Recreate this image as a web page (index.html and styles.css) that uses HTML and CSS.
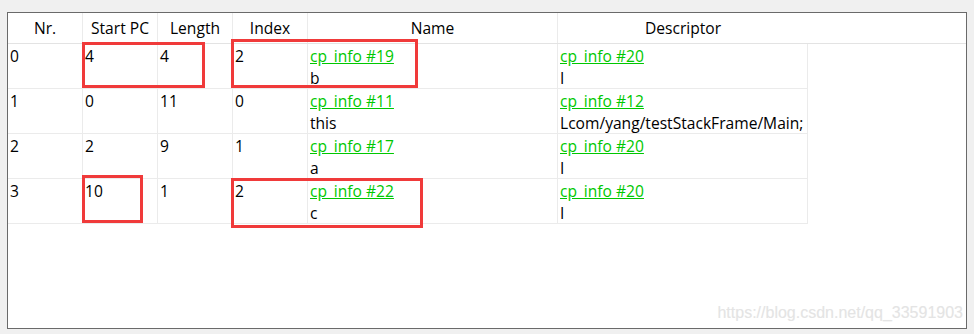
FILE: index.html
```
<!DOCTYPE html>
<html lang="en">
<head>
    <meta charset="UTF-8">
    <title>Local Variable Table</title>
    <link rel="stylesheet" href="styles.css">
</head>
<body>

    <div class="frame">
        <div class="row head">
            <div class="cell">Nr.</div>
            <div class="cell">Start PC</div>
            <div class="cell">Length</div>
            <div class="cell">Index</div>
            <div class="cell wide">Name</div>
            <div class="cell wide last">Descriptor</div>
        </div>

        <div class="row">
            <div class="cell">0</div>
            <div class="cell">4</div>
            <div class="cell">4</div>
            <div class="cell">2</div>
            <div class="cell wide"><a href="#">cp_info #19</a><span>b</span></div>
            <div class="cell wide"><a href="#">cp_info #20</a><span>I</span></div>
        </div>
        <div class="row">
            <div class="cell">1</div>
            <div class="cell">0</div>
            <div class="cell">11</div>
            <div class="cell">0</div>
            <div class="cell wide"><a href="#">cp_info #11</a><span>this</span></div>
            <div class="cell wide"><a href="#">cp_info #12</a><span>Lcom/yang/testStackFrame/Main;</span></div>
        </div>
        <div class="row">
            <div class="cell">2</div>
            <div class="cell">2</div>
            <div class="cell">9</div>
            <div class="cell">1</div>
            <div class="cell wide"><a href="#">cp_info #17</a><span>a</span></div>
            <div class="cell wide"><a href="#">cp_info #20</a><span>I</span></div>
        </div>
        <div class="row">
            <div class="cell">3</div>
            <div class="cell">10</div>
            <div class="cell">1</div>
            <div class="cell">2</div>
            <div class="cell wide"><a href="#">cp_info #22</a><span>c</span></div>
            <div class="cell wide"><a href="#">cp_info #20</a><span>I</span></div>
        </div>

        <!-- highlight boxes drawn on top of the table -->
        <div class="mark m1"></div>
        <div class="mark m2"></div>
        <div class="mark m3"></div>
        <div class="mark m4"></div>

        <div class="watermark">https://blog.csdn.net/qq_33591903</div>
    </div>

</body>
</html>
```

FILE: styles.css
```
body {
    margin: 0;
    background-color: #f0f0f0;
    font-family: "Open Sans", "Noto Sans CJK SC", sans-serif;
    font-size: 15.6px;
    color: #000;
}
.frame {
    position: relative;
    margin: 12px 0 0 7px;
    width: 960px;
    height: 317px;
    box-sizing: border-box;
    border: 1px solid #6a6a6a;
    background-color: #fff;
}
.row {
    display: flex;
    width: 800px;
    height: 45px;
    border-bottom: 1px solid #ebebeb;
    box-sizing: border-box;
}
.row.head {
    width: 100%;
    height: 31px;
    border-bottom-color: #e3e3e3;
}
.cell {
    width: 75px;
    box-sizing: border-box;
    border-right: 1px solid #ebebeb;
    padding: 1px 2px 0 2px;
    line-height: 22px;
    display: flex;
    flex-direction: column;
    align-items: flex-start;
}
.cell.wide {
    width: 250px;
}
.head .cell {
    line-height: 30px;
    padding: 0;
    align-items: center;
}
.head .cell.last {
    border-right: none;
}
.cell a {
    color: #00c800;
    text-decoration: underline;
}
.mark {
    position: absolute;
    border: 3px solid #f03a3a;
    box-sizing: border-box;
}
.m1 { left: 74px; top: 29px; width: 123px; height: 46px; }
.m2 { left: 223px; top: 26px; width: 187px; height: 49px; }
.m3 { left: 74px; top: 162px; width: 61px; height: 48px; }
.m4 { left: 223px; top: 165px; width: 192px; height: 50px; }
.watermark {
    position: absolute;
    right: 3px;
    bottom: 6px;
    font-family: "Liberation Sans", Arial, sans-serif;
    font-size: 16px;
    color: #e4e4e4;
    text-shadow: 0 0 1px #f6f6f6;
}
```
